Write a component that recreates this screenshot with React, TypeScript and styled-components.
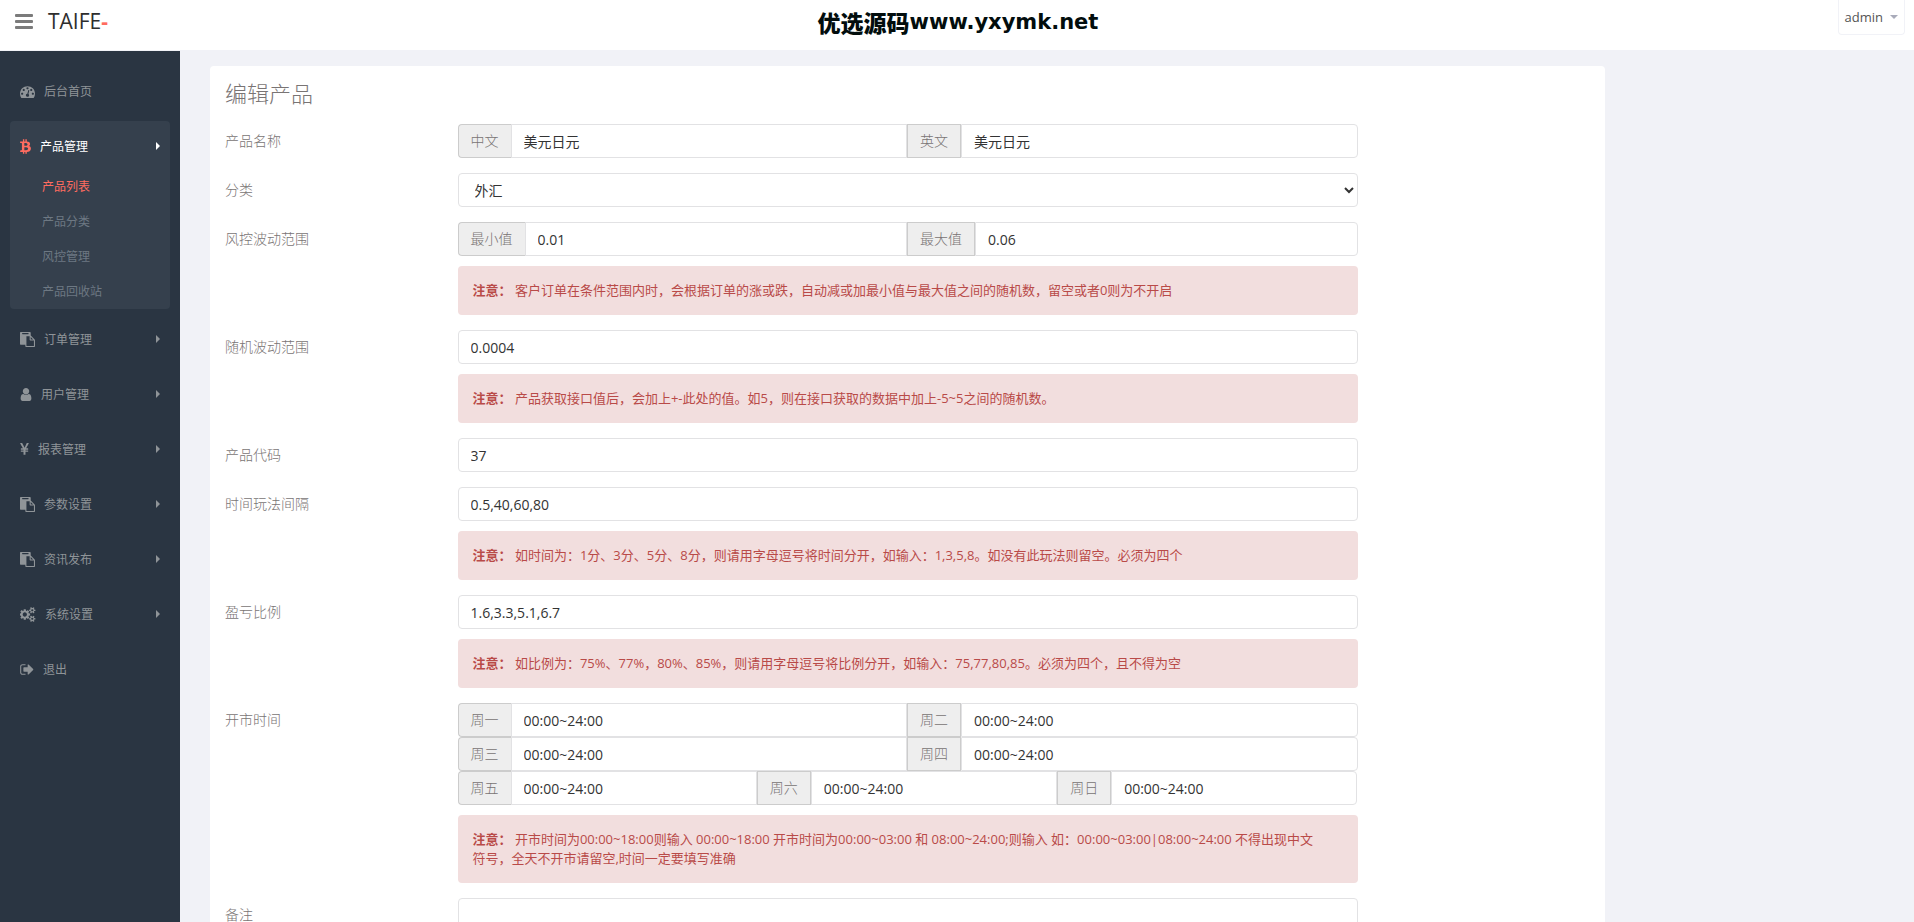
import React from 'react';
import styled, { createGlobalStyle, css } from 'styled-components';

const GlobalStyle = createGlobalStyle`
  *, *::before, *::after { box-sizing: border-box; }
  body {
    margin: 0;
    background: #f1f2f7;
    color: #797979;
    font-family: 'Open Sans', 'Noto Sans CJK SC', sans-serif;
    font-size: 13px;
  }
  button, input, select, textarea { font-family: inherit; }
  ul { list-style: none; margin: 0; padding: 0; }
  a { color: inherit; text-decoration: none; }
`;

const Shell = styled.div`
  display: grid;
  grid-template-columns: 180px minmax(0, 1fr);
  grid-template-rows: 51px minmax(0, 1fr);
  height: 100vh;
  overflow: hidden;
`;

const Header = styled.header`
  grid-column: 1 / -1;
  display: grid;
  grid-template-columns: 1fr auto 1fr;
  align-items: start;
  background: #fff;
  border-bottom: 1px solid #f1f2f7;
`;

const Brand = styled.div`
  display: flex;
  align-items: center;
  gap: 15px;
  height: 42px;
  padding-left: 15px;
`;

const MenuButton = styled.button`
  display: flex;
  flex-direction: column;
  gap: 3px;
  width: 18px;
  padding: 0;
  border: 0;
  background: none;
  cursor: pointer;
`;

const MenuBar = styled.span`
  height: 3px;
  border-radius: 1px;
  background: #7b7b7b;
`;

const Logo = styled.a`
  color: #2e2e2e;
  font-size: 21px;
  line-height: 30px;
`;

const LogoMark = styled.span`
  color: #ff6c60;
  font-weight: 700;
`;

const SiteName = styled.div`
  display: flex;
  align-items: center;
  height: 43px;
  padding-left: 2px;
  color: #020d0d;
  font-family: 'Noto Sans CJK SC', sans-serif;
  font-size: 23px;
  font-weight: 900;
  line-height: 30px;
`;

const SiteDomain = styled.span`
  font-family: 'DejaVu Sans', sans-serif;
  font-size: 21px;
  font-weight: 700;
`;

const UserButton = styled.button`
  display: flex;
  align-items: center;
  gap: 7px;
  justify-self: end;
  height: 35px;
  margin-right: 9px;
  padding: 0 6px;
  border: 1px solid #f1f2f7;
  border-top: 0;
  border-radius: 0 0 4px 4px;
  background: #fff;
  color: #555;
  font-size: 13px;
  cursor: pointer;
`;

const Caret = styled.span`
  border: 4px solid transparent;
  border-top-color: #a9abba;
  border-bottom: 0;
`;

const Sidebar = styled.nav`
  padding: 15px 10px;
  background: #2a3542;
  font-size: 12px;
  overflow: hidden;
`;

const MenuItem = styled.li<{ $active?: boolean }>`
  margin-bottom: 5px;
  border-radius: 4px;
  color: ${(p) => (p.$active ? '#fff' : '#8f9498')};
  ${(p) => p.$active && css`background: #35404d;`}
`;

const MenuLink = styled.a`
  display: flex;
  align-items: center;
  gap: 9px;
  height: 50px;
  padding: 0 10px;
`;

const MenuText = styled.span`
  flex: 1;
`;

const MenuArrow = styled.span`
  border: 4px solid transparent;
  border-left-color: currentColor;
  border-right: 0;
`;

const MenuIcon = styled.span<{ $active?: boolean }>`
  display: flex;
  color: ${(p) => (p.$active ? '#ff6c60' : 'inherit')};
`;

const SubMenu = styled.ul`
  margin-top: -2px;
`;

const SubLink = styled.a<{ $active?: boolean }>`
  display: block;
  padding-left: 32px;
  line-height: 35px;
  color: ${(p) => (p.$active ? '#ff6c60' : '#6d7883')};
`;

const Content = styled.main`
  display: grid;
  grid-template-columns: 10fr 2fr;
  align-items: start;
  padding: 15px 9px 15px 15px;
  overflow-y: auto;
  scrollbar-width: none;
`;

const Panel = styled.section`
  margin: 0 15px;
  padding: 15px;
  border-radius: 4px;
  background: #fff;
`;

const Title = styled.h3`
  margin: 0 0 19px;
  color: #797474;
  font-size: 22px;
  font-weight: 300;
  line-height: 24px;
`;

const FormRow = styled.div`
  display: grid;
  grid-template-columns: minmax(0, 2fr) minmax(0, 8fr) minmax(0, 2fr);
  margin: 0 -15px 15px;
`;

const Label = styled.label`
  padding: 0 15px;
  color: #797474;
  font-size: 14px;
  font-weight: 300;
  line-height: 34px;
`;

const Field = styled.div`
  padding: 0 15px;
`;

const control = css`
  border: 1px solid #e2e2e4;
  border-radius: 4px;
  background: #fff;
  color: #333;
  font-size: 14px;
`;

const TextInput = styled.input`
  ${control}
  display: block;
  width: 100%;
  height: 34px;
  padding: 0 12px;
`;

const Select = styled.select`
  ${control}
  display: block;
  width: 100%;
  height: 34px;
  padding: 0 12px;
`;

const TextArea = styled.textarea`
  ${control}
  display: block;
  width: 100%;
  height: 120px;
  padding: 6px 12px;
`;

const InputGroup = styled.div`
  display: flex;
  height: 34px;

  & > input {
    flex: 1;
    width: 0;
    min-width: 0;
    border-radius: 0;
  }
  & > input:last-child { border-radius: 0 4px 4px 0; }
  & > label:first-child {
    border-right: 0;
    border-radius: 4px 0 0 4px;
  }
`;

const Addon = styled.label`
  padding: 0 12px;
  border: 1px solid #ccc;
  background: #eee;
  color: #797474;
  font-size: 14px;
  font-weight: 300;
  line-height: 32px;
  white-space: nowrap;
`;

const Notice = styled.div`
  margin-top: 10px;
  padding: 15px 35px 15px 15px;
  border-radius: 4px;
  background: #f2dede;
  color: #b94a48;
  font-size: 13px;
  line-height: 19px;
`;

type IconShape = { box: string; width: number; d: string };

const shapes: Record<string, IconShape> = {
  dashboard: {
    box: '0 0 1792 1792',
    width: 15,
    d: 'M384 1152q0-53-37.5-90.5t-90.5-37.5-90.5 37.5-37.5 90.5 37.5 90.5 90.5 37.5 90.5-37.5 37.5-90.5zm192-448q0-53-37.5-90.5t-90.5-37.5-90.5 37.5-37.5 90.5 37.5 90.5 90.5 37.5 90.5-37.5 37.5-90.5zm428 481l101-382q6-26-7.5-48.5t-38.5-29.5-48 6.5-30 39.5l-101 382q-60 5-107 43.5t-63 98.5q-20 77 20 146t117 89 146-20 89-117q16-60-6-117t-72-91zm660-33q0-53-37.5-90.5t-90.5-37.5-90.5 37.5-37.5 90.5 37.5 90.5 90.5 37.5 90.5-37.5 37.5-90.5zm-640-640q0-53-37.5-90.5t-90.5-37.5-90.5 37.5-37.5 90.5 37.5 90.5 90.5 37.5 90.5-37.5 37.5-90.5zm448 192q0-53-37.5-90.5t-90.5-37.5-90.5 37.5-37.5 90.5 37.5 90.5 90.5 37.5 90.5-37.5 37.5-90.5zm320 448q0 261-141 483-19 29-54 29h-1402q-35 0-54-29-141-221-141-483 0-182 71-348t191-286 286-191 348-71 348 71 286 191 191 286 71 348z',
  },
  bitcoin: {
    box: '0 0 384 512',
    width: 11,
    d: 'M310.204 242.638c27.73-14.18 45.377-39.39 41.28-81.3-5.358-57.351-52.458-76.573-114.85-81.929V0h-48.528v77.203c-12.605 0-25.525.315-38.444.63V0h-48.53v79.409c-17.842.539-38.622.276-97.37 0v51.678c38.314-.678 58.417-3.14 63.023 21.427v217.429c-2.925 19.492-18.524 16.685-53.255 16.071L3.765 443.68c88.481 0 97.37.315 97.37.315V512h48.53v-67.06c13.234.315 26.154.315 38.444.315V512h48.528v-68.005c81.299-4.412 135.647-24.894 142.895-101.467 5.671-61.446-23.32-88.862-69.326-99.89zM150.608 134.553c27.415 0 113.126-8.507 113.126 48.528 0 54.515-85.71 48.212-113.126 48.212v-96.74zm0 251.776V279.821c32.772 0 133.127-9.138 133.127 53.255-.001 60.186-100.355 53.253-133.127 53.253z',
  },
  paste: {
    box: '0 0 1792 1792',
    width: 15,
    d: 'M768 1664h896v-640h-416q-40 0-68-28t-28-68v-416h-384v1152zm256-1440v-64q0-13-9.5-22.5t-22.5-9.5h-704q-13 0-22.5 9.5t-9.5 22.5v64q0 13 9.5 22.5t22.5 9.5h704q13 0 22.5-9.5t9.5-22.5zm256 672h299l-299-299v299zm512 128v672q0 40-28 68t-68 28h-960q-40 0-68-28t-28-68v-160h-544q-40 0-68-28t-28-68v-1344q0-40 28-68t68-28h1088q40 0 68 28t28 68v328q21 13 36 28l408 408q28 28 48 76t20 88z',
  },
  user: {
    box: '216 0 1360 1792',
    width: 12,
    d: 'M1536 1399q0 109-62.5 187t-150.5 78h-854q-88 0-150.5-78t-62.5-187q0-85 8.5-160.5t31.5-152 58.5-131 94-89 134.5-34.5q131 128 313 128t313-128q76 0 134.5 34.5t94 89 58.5 131 31.5 152 8.5 160.5zm-256-887q0 159-112.5 271.5t-271.5 112.5-271.5-112.5-112.5-271.5 112.5-271.5 271.5-112.5 271.5 112.5 112.5 271.5z',
  },
  yen: {
    box: '370 0 1060 1792',
    width: 9,
    d: 'M985.5 1536h-172q-13 0-22.5-9t-9.5-23v-330h-288q-13 0-22.5-9t-9.5-23v-103q0-13 9.5-22.5t22.5-9.5h288v-85h-288q-13 0-22.5-9t-9.5-23v-104q0-13 9.5-22.5t22.5-9.5h214l-321-578q-8-16 0-32 10-16 28-16h194q19 0 29 18l215 425q19 38 56 125 10-24 30.5-68t27.5-61l191-420q8-19 29-19h191q17 0 27 16 9 14 1 31l-313 579h215q13 0 22.5 9.5t9.5 22.5v104q0 14-9.5 23t-22.5 9h-290v85h290q13 0 22.5 9.5t9.5 22.5v103q0 14-9.5 23t-22.5 9h-290v330q0 13-9.5 22.5t-22.5 9.5z',
  },
  cogs: {
    box: '0 0 1920 1792',
    width: 16,
    d: 'M832 896q0-106-75-181t-181-75-181 75-75 181 75 181 181 75 181-75 75-181zm768 512q0-52-38-90t-90-38-90 38-38 90q0 53 37.5 90.5t90.5 37.5 90.5-37.5 37.5-90.5zm0-1024q0-52-38-90t-90-38-90 38-38 90q0 53 37.5 90.5t90.5 37.5 90.5-37.5 37.5-90.5zm-384 421v185q0 10-7 19.5t-16 10.5l-155 24q-11 35-32 76 34 48 90 115 7 11 7 20 0 12-7 19-23 30-82.5 89.5t-78.5 59.5q-11 0-21-7l-115-90q-37 19-77 31-11 108-23 155-7 24-30 24h-186q-11 0-20-7.5t-10-17.5l-23-153q-34-10-75-31l-118 89q-7 7-20 7-11 0-21-8-144-133-144-160 0-9 7-19 10-14 41-53t47-61q-23-44-35-82l-152-24q-10-1-17-9.5t-7-19.5v-185q0-10 7-19.5t16-10.5l155-24q11-35 32-76-34-48-90-115-7-11-7-20 0-12 7-20 22-30 82-89t79-59q11 0 21 7l115 90q34-18 77-32 11-108 23-154 7-24 30-24h186q11 0 20 7.5t10 17.5l23 153q34 10 75 31l118-89q8-7 20-7 11 0 21 8 144 133 144 160 0 8-7 19-12 16-42 54t-45 60q23 48 34 82l152 23q10 2 17 10.5t7 19.5zm640 533v140q0 16-149 31-12 27-30 52 51 113 51 138 0 4-4 7-122 71-124 71-8 0-46-47t-52-68q-20 2-30 2t-30-2q-14 21-52 68t-46 47q-2 0-124-71-4-3-4-7 0-25 51-138-18-25-30-52-149-15-149-31v-140q0-16 149-31 13-29 30-52-51-113-51-138 0-4 4-7 4-2 35-20t59-34 30-16q8 0 46 46.5t52 67.5q20-2 30-2t30 2q51-71 92-112l6-2q4 0 124 70 4 3 4 7 0 25-51 138 17 23 30 52 149 15 149 31zm0-1024v140q0 16-149 31-12 27-30 52 51 113 51 138 0 4-4 7-122 71-124 71-8 0-46-47t-52-68q-20 2-30 2t-30-2q-14 21-52 68t-46 47q-2 0-124-71-4-3-4-7 0-25 51-138-18-25-30-52-149-15-149-31v-140q0-16 149-31 13-29 30-52-51-113-51-138 0-4 4-7 4-2 35-20t59-34 30-16q8 0 46 46.5t52 67.5q20-2 30-2t30 2q51-71 92-112l6-2q4 0 124 70 4 3 4 7 0 25-51 138 17 23 30 52 149 15 149 31z',
  },
  signOut: {
    box: '64 0 1632 1792',
    width: 14,
    d: 'M704 1440q0 4 1 20t.5 26.5-3 23.5-10 19.5-20.5 6.5h-320q-119 0-203.5-84.5t-84.5-203.5v-704q0-119 84.5-203.5t203.5-84.5h320q13 0 22.5 9.5t9.5 22.5q0 4 1 20t.5 26.5-3 23.5-10 19.5-20.5 6.5h-320q-66 0-113 47t-47 113v704q0 66 47 113t113 47h312l11.5 1 11.5 3 8 5.5 7 9 2 13.5zm928-544q0 26-19 45l-544 544q-19 19-45 19t-45-19-19-45v-288h-448q-26 0-45-19t-19-45v-384q0-26 19-45t45-19h448v-288q0-26 19-45t45-19 45 19l544 544q19 19 19 45z',
  },
};

function Icon({ name }: { name: string }) {
  const s = shapes[name];
  return (
    <svg viewBox={s.box} width={s.width} height={15} fill="currentColor" aria-hidden="true">
      <path d={s.d} />
    </svg>
  );
}

type Entry = { icon: string; text: string; arrow?: boolean; sub?: string[] };

const menu: Entry[] = [
  { icon: 'dashboard', text: '后台首页' },
  { icon: 'bitcoin', text: '产品管理', arrow: true, sub: ['产品列表', '产品分类', '风控管理', '产品回收站'] },
  { icon: 'paste', text: '订单管理', arrow: true },
  { icon: 'user', text: '用户管理', arrow: true },
  { icon: 'yen', text: '报表管理', arrow: true },
  { icon: 'paste', text: '参数设置', arrow: true },
  { icon: 'paste', text: '资讯发布', arrow: true },
  { icon: 'cogs', text: '系统设置', arrow: true },
  { icon: 'signOut', text: '退出' },
];

type Part = { id: string; label: string; value: string };

function Group({ parts }: { parts: Part[] }) {
  return (
    <InputGroup>
      {parts.map((p) => (
        <React.Fragment key={p.id}>
          <Addon htmlFor={p.id}>{p.label}</Addon>
          <TextInput id={p.id} type="text" defaultValue={p.value} />
        </React.Fragment>
      ))}
    </InputGroup>
  );
}

function Row({ label, id, note, children }: { label: string; id: string; note?: string; children: React.ReactNode }) {
  return (
    <FormRow>
      <Label htmlFor={id}>{label}</Label>
      <Field>
        {children}
        {note && (
          <Notice>
            <strong>注意：</strong> {note}
          </Notice>
        )}
      </Field>
    </FormRow>
  );
}

const HOURS = '00:00~24:00';

export default function App() {
  return (
    <>
      <GlobalStyle />
      <Shell>
        <Header>
          <Brand>
            <MenuButton type="button" aria-label="菜单">
              <MenuBar />
              <MenuBar />
              <MenuBar />
            </MenuButton>
            <Logo href="#">
              TAIFE<LogoMark>-</LogoMark>
            </Logo>
          </Brand>
          <SiteName>
            优选源码<SiteDomain>www.yxymk.net</SiteDomain>
          </SiteName>
          <UserButton type="button">
            admin <Caret />
          </UserButton>
        </Header>

        <Sidebar>
          <ul>
            {menu.map((m) => (
              <MenuItem key={m.text} $active={!!m.sub}>
                <MenuLink href="#">
                  <MenuIcon $active={!!m.sub}>
                    <Icon name={m.icon} />
                  </MenuIcon>
                  <MenuText>{m.text}</MenuText>
                  {m.arrow && <MenuArrow />}
                </MenuLink>
                {m.sub && (
                  <SubMenu>
                    {m.sub.map((s, i) => (
                      <li key={s}>
                        <SubLink href="#" $active={i === 0}>
                          {s}
                        </SubLink>
                      </li>
                    ))}
                  </SubMenu>
                )}
              </MenuItem>
            ))}
          </ul>
        </Sidebar>

        <Content>
          <Panel>
            <Title>编辑产品</Title>
            <form>
              <Row label="产品名称" id="name-zh">
                <Group
                  parts={[
                    { id: 'name-zh', label: '中文', value: '美元日元' },
                    { id: 'name-en', label: '英文', value: '美元日元' },
                  ]}
                />
              </Row>
              <Row label="分类" id="category">
                <Select id="category" defaultValue="外汇">
                  <option>外汇</option>
                </Select>
              </Row>
              <Row
                label="风控波动范围"
                id="risk-min"
                note="客户订单在条件范围内时，会根据订单的涨或跌，自动减或加最小值与最大值之间的随机数，留空或者0则为不开启"
              >
                <Group
                  parts={[
                    { id: 'risk-min', label: '最小值', value: '0.01' },
                    { id: 'risk-max', label: '最大值', value: '0.06' },
                  ]}
                />
              </Row>
              <Row
                label="随机波动范围"
                id="random"
                note="产品获取接口值后，会加上+-此处的值。如5，则在接口获取的数据中加上-5~5之间的随机数。"
              >
                <TextInput id="random" type="text" defaultValue="0.0004" />
              </Row>
              <Row label="产品代码" id="code">
                <TextInput id="code" type="text" defaultValue="37" />
              </Row>
              <Row
                label="时间玩法间隔"
                id="interval"
                note="如时间为：1分、3分、5分、8分，则请用字母逗号将时间分开，如输入：1,3,5,8。如没有此玩法则留空。必须为四个"
              >
                <TextInput id="interval" type="text" defaultValue="0.5,40,60,80" />
              </Row>
              <Row
                label="盈亏比例"
                id="ratio"
                note="如比例为：75%、77%，80%、85%，则请用字母逗号将比例分开，如输入：75,77,80,85。必须为四个，且不得为空"
              >
                <TextInput id="ratio" type="text" defaultValue="1.6,3.3,5.1,6.7" />
              </Row>
              <Row
                label="开市时间"
                id="day-1"
                note="开市时间为00:00~18:00则输入 00:00~18:00 开市时间为00:00~03:00 和 08:00~24:00;则输入 如：00:00~03:00|08:00~24:00 不得出现中文符号，全天不开市请留空,时间一定要填写准确"
              >
                <Group
                  parts={[
                    { id: 'day-1', label: '周一', value: HOURS },
                    { id: 'day-2', label: '周二', value: HOURS },
                  ]}
                />
                <Group
                  parts={[
                    { id: 'day-3', label: '周三', value: HOURS },
                    { id: 'day-4', label: '周四', value: HOURS },
                  ]}
                />
                <Group
                  parts={[
                    { id: 'day-5', label: '周五', value: HOURS },
                    { id: 'day-6', label: '周六', value: HOURS },
                    { id: 'day-7', label: '周日', value: HOURS },
                  ]}
                />
              </Row>
              <Row label="备注" id="remark">
                <TextArea id="remark" />
              </Row>
            </form>
          </Panel>
        </Content>
      </Shell>
    </>
  );
}
